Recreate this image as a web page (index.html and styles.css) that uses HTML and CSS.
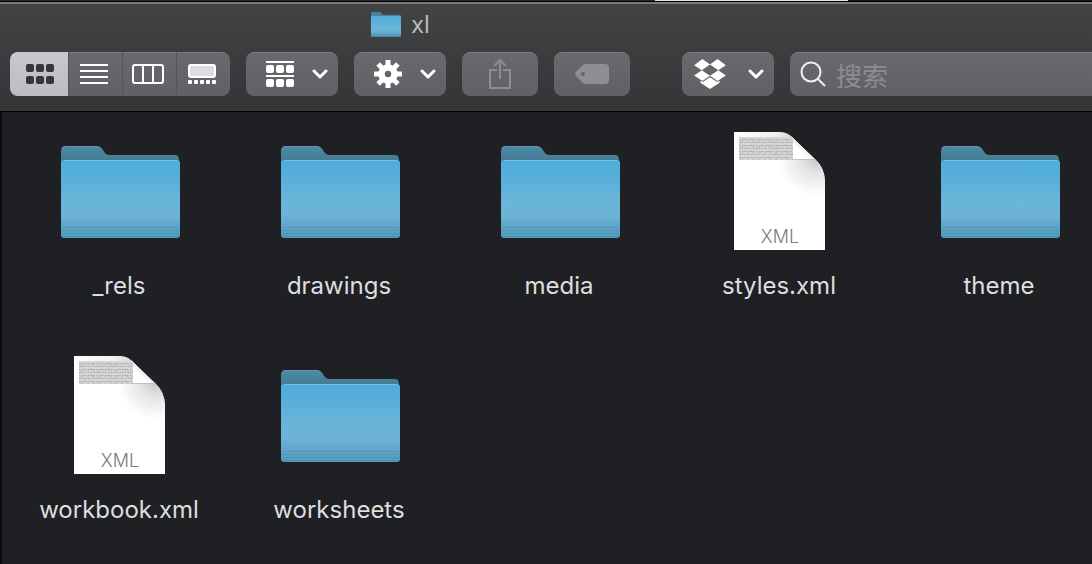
FILE: index.html
```html
<!DOCTYPE html>
<html lang="zh-CN">
<head>
<meta charset="utf-8">
<meta name="viewport" content="width=device-width, initial-scale=1">
<title>xl</title>
<link rel="stylesheet" href="styles.css">
</head>
<body>
<svg class="defs" aria-hidden="true">
  <defs>
    <linearGradient id="folder-front" x1="0" y1="0" x2="0" y2="1">
      <stop offset="0" stop-color="#50acda"/>
      <stop offset=".15" stop-color="#53aedb"/>
      <stop offset=".52" stop-color="#69b5d8"/>
      <stop offset=".7" stop-color="#6cb4d6"/>
      <stop offset=".84" stop-color="#62a6cb"/>
      <stop offset="1" stop-color="#509abb"/>
    </linearGradient>
    <linearGradient id="folder-back" x1="0" y1="0" x2="0" y2="1">
      <stop offset="0" stop-color="#4c8ba7"/>
      <stop offset=".2" stop-color="#44788f"/>
      <stop offset="1" stop-color="#416f87"/>
    </linearGradient>
    <linearGradient id="page-top" x1="0" y1="0" x2="1" y2="0">
      <stop offset="0" stop-color="#fff"/>
      <stop offset=".7" stop-color="#f0f0f0"/>
      <stop offset="1" stop-color="#d2d2d2"/>
    </linearGradient>
    <radialGradient id="curl-shadow" gradientUnits="userSpaceOnUse" cx="82" cy="26" r="38">
      <stop offset="0" stop-color="#c6c6c6"/>
      <stop offset=".4" stop-color="#e4e4e4"/>
      <stop offset="1" stop-color="#fff"/>
    </radialGradient>
    <linearGradient id="curl" x1="0" y1="1" x2="1" y2="0">
      <stop offset="0" stop-color="#fff"/>
      <stop offset=".35" stop-color="#fff"/>
      <stop offset=".6" stop-color="#dedede"/>
    </linearGradient>
    <pattern id="print" width="17" height="6" patternUnits="userSpaceOnUse">
      <rect width="17" height="6" fill="#d6d6d4"/>
      <path d="M0 1.500h4m1 0h2m1 0h5m1 0h3M0 4.500h2m1 0h6m1 0h3m1 0h2" stroke="#acacaa" stroke-width="1" stroke-dasharray="1.500 .6"/>
      <path d="M1 3h3m2 0h4m3 0h2" stroke="#bcbcba" stroke-width="1"/>
    </pattern>
    <symbol id="folder" viewBox="0 0 119 94">
      <path d="M0 88V6Q0 1 5 1h31q3 0 5 3l3 4q1 2 4 2h66q4 0 4 5v73z" fill="url(#folder-back)"/>
      <path d="M2 2.500Q3 1.500 6 1.500h30q3 0 5 3" fill="none" stroke="#5f9cb6" stroke-opacity=".7"/>
      <rect x="0" y="15" width="119" height="78" rx="3" fill="url(#folder-front)"/>
      <path d="M3 15.500h113" stroke="#73c0e4"/>
      <path d="M1 82.500h117M1 85.500h117M1 88.500h117" stroke="#4d93b7" stroke-opacity=".65"/>
      <path d="M1 91.500h117" stroke="#4594b4"/>
    </symbol>
    <symbol id="document" viewBox="0 0 91 118">
      <path d="M0 0h43c8 0 12 2 16 6l21 20q11 10 11 24v68H0z" fill="#fff"/>
      <path d="M0 0h43c8 0 12 2 16 6v21H0z" fill="url(#page-top)"/>
      <path d="M44 27h37q10 9 10 23v16H44z" fill="url(#curl-shadow)"/>
      <path d="M5 5h54v23H5z" fill="url(#print)"/>
      <path d="M59 6l21 21H59z" fill="url(#curl)"/>
      <path d="M59 27.500h21" stroke="#b4b4b4" stroke-opacity=".7"/>
      <text class="doc-kind" x="46" y="111" text-anchor="middle">XML</text>
    </symbol>
    <symbol id="chevron" viewBox="0 0 16 10">
      <path d="M2 2l6 6 6-6" fill="none" stroke="#fff" stroke-width="3" stroke-linecap="round" stroke-linejoin="round"/>
    </symbol>
  </defs>
</svg>

<main class="window">
  <header class="chrome">
    <h1 class="title"><svg class="title-icon" viewBox="0 0 119 94" preserveAspectRatio="none" aria-hidden="true"><use href="#folder"/></svg>xl</h1>
    <div class="toolbar" role="toolbar" aria-label="工具栏">
      <div class="segments">
        <button class="segment selected" type="button" aria-label="图标" aria-pressed="true">
          <svg width="28" height="20" viewBox="0 0 28 20" fill="#36373a"><rect width="8" height="8" rx="2"/><rect x="10" width="8" height="8" rx="2"/><rect x="20" width="8" height="8" rx="2"/><rect y="12" width="8" height="8" rx="2"/><rect x="10" y="12" width="8" height="8" rx="2"/><rect x="20" y="12" width="8" height="8" rx="2"/></svg>
        </button>
        <button class="segment" type="button" aria-label="列表">
          <svg width="28" height="20" viewBox="0 0 28 20" fill="#fff"><path d="M0 0h28v2H0zM0 6h28v2H0zM0 12h28v2H0zM0 18h28v2H0z"/></svg>
        </button>
        <button class="segment" type="button" aria-label="分栏">
          <svg width="32" height="20" viewBox="0 0 32 20" fill="none" stroke="#fff" stroke-width="2"><rect x="1" y="1" width="30" height="18" rx="2"/><path d="M11 1v18M21 1v18"/></svg>
        </button>
        <button class="segment" type="button" aria-label="画廊">
          <svg width="28" height="20" viewBox="0 0 28 20"><rect x="1" y="1" width="26" height="12" rx="2" fill="#dcdde1" stroke="#fff" stroke-width="2"/><g fill="#fff"><rect y="16" width="4" height="4" rx="1"/><rect x="6" y="16" width="4" height="4" rx="1"/><rect x="12" y="16" width="4" height="4" rx="1"/><rect x="18" y="16" width="4" height="4" rx="1"/><rect x="24" y="16" width="4" height="4" rx="1"/></g></svg>
        </button>
      </div>
      <button class="tool menu" type="button" aria-label="分组">
        <svg width="28" height="26" viewBox="0 0 28 26" fill="#fff"><path d="M0 0h28v2H0zM0 14h28v2H0z"/><rect y="4" width="8" height="8" rx="2"/><rect x="10" y="4" width="8" height="8" rx="2"/><rect x="20" y="4" width="8" height="8" rx="2"/><rect y="18" width="8" height="8" rx="2"/><rect x="10" y="18" width="8" height="8" rx="2"/><rect x="20" y="18" width="8" height="8" rx="2"/></svg>
        <svg class="chevron"><use href="#chevron"/></svg>
      </button>
      <button class="tool menu" type="button" aria-label="操作">
        <svg width="28" height="28" viewBox="-14 -14 28 28"><circle r="6.500" fill="none" stroke="#fff" stroke-width="6.500"/><g stroke="#fff" stroke-width="5"><path d="M0-14v5M0 9v5M-14 0h5M9 0h5"/><path d="M0-14v6M0 8v6M-14 0h6M8 0h6" transform="rotate(45)"/></g></svg>
        <svg class="chevron"><use href="#chevron"/></svg>
      </button>
      <button class="tool" type="button" aria-label="共享" disabled>
        <svg width="22" height="32" viewBox="0 0 22 32" fill="none" stroke="#8c8d90" stroke-width="2"><path d="M8 12H1v18h20V12h-7M11 21V2M5 8l6-6 6 6"/></svg>
      </button>
      <button class="tool" type="button" aria-label="标签" disabled>
        <svg width="34" height="20" viewBox="0 0 34 20"><path fill="#8e8f92" fill-rule="evenodd" d="M10 0h20q4 0 4 4v12q0 4-4 4H10q-1 0-2-1L1 12q-2-2 0-4L8 1q1-1 2-1zM8 8a2 2 0 1 0 0 4 2 2 0 0 0 0-4z"/></svg>
      </button>
      <button class="tool menu dropbox" type="button" aria-label="Dropbox">
        <svg width="32" height="30" viewBox="72 53 96 91" fill="#fff"><path d="M97 53l23 17-25 17-23-15zM143 53l-23 17 25 17 23-15zM95 87l25 17-23 16-25-17zM145 87l-25 17 23 16 25-17zM120 108l-22 15-7-4v6l29 19 29-19v-6l-7 4z"/></svg>
        <svg class="chevron"><use href="#chevron"/></svg>
      </button>
      <label class="search">
        <svg width="26" height="26" viewBox="0 0 26 26" fill="none" stroke="#f2f2f2" stroke-width="2"><circle cx="11" cy="11" r="9.500"/><path d="M18 18l7 7"/></svg>
        <input type="search" placeholder="搜索" aria-label="搜索">
      </label>
    </div>
  </header>

  <ul class="files">
    <li class="file"><svg class="folder-icon" aria-hidden="true"><use href="#folder"/></svg><span class="name">_rels</span></li>
    <li class="file"><svg class="folder-icon" aria-hidden="true"><use href="#folder"/></svg><span class="name">drawings</span></li>
    <li class="file"><svg class="folder-icon" aria-hidden="true"><use href="#folder"/></svg><span class="name">media</span></li>
    <li class="file"><svg class="doc-icon" role="img" aria-label="XML"><use href="#document"/></svg><span class="name">styles.xml</span></li>
    <li class="file"><svg class="folder-icon" aria-hidden="true"><use href="#folder"/></svg><span class="name">theme</span></li>
    <li class="file"><svg class="doc-icon" role="img" aria-label="XML"><use href="#document"/></svg><span class="name">workbook.xml</span></li>
    <li class="file"><svg class="folder-icon" aria-hidden="true"><use href="#folder"/></svg><span class="name">worksheets</span></li>
  </ul>
</main>
</body>
</html>
```
FILE: styles.css
```css
* { box-sizing: border-box; }

body {
  margin: 0;
  min-height: 100vh;
  display: flex;
  flex-direction: column;
  overflow: hidden;
  background: #000;
  color: #dededf;
  font-family: Inter, "Noto Sans CJK SC", sans-serif;
}

/* Sliver of the window behind */
body::before {
  content: "";
  height: 1px;
  margin-bottom: 1px;
  background: linear-gradient(90deg, #242526 0 655px, #e4e8e4 655px 848px, #161817 848px);
}

.defs { position: absolute; width: 0; height: 0; }

.window {
  flex: 1;
  display: flex;
  flex-direction: column;
}

.chrome {
  border-top: 2px solid #77797a;
  border-bottom: 1px solid #000;
  padding-bottom: 15px;
  background: linear-gradient(#424345, #343537);
}

.title {
  display: flex;
  align-items: center;
  gap: 10px;
  height: 40px;
  margin: 0;
  padding-left: 371px;
  color: #b9babb;
  font-size: 24px;
  font-weight: 400;
}

.title-icon { width: 30px; height: 25px; }

.toolbar {
  display: flex;
  gap: 16px;
  height: 52px;
  padding: 8px 0 0 10px;
}

.segments, .tool, .search {
  flex: none;
  height: 44px;
  border: 0;
  border-radius: 8px;
  background: linear-gradient(#7c7d80 1px, #68696c 1px, #606164);
}

.segments {
  display: flex;
  width: 220px;
  overflow: hidden;
}

.segment {
  flex: 1;
  display: flex;
  align-items: center;
  justify-content: center;
  padding: 0 3px 0 0;
  border: 0;
  border-left: 1px solid #545558;
  background: none;
}

.segment.selected {
  flex: 0 0 58px;
  padding: 0 0 0 2px;
  border: 0;
  background: linear-gradient(#c7c8cd, #bcbdc2);
}

.tool {
  display: flex;
  align-items: center;
  justify-content: center;
  width: 76px;
  padding: 0;
}

.tool.menu {
  justify-content: space-between;
  width: 92px;
  padding: 0 10px 0 20px;
}

.tool.dropbox {
  margin-left: 36px;
  padding-left: 12px;
}

.chevron { width: 16px; height: 10px; }

.search {
  flex: 1;
  display: flex;
  align-items: center;
  gap: 10px;
  padding-left: 10px;
  border-radius: 8px 0 0 8px;
}

.search svg { flex: none; }

.search input {
  flex: 1;
  min-width: 0;
  padding: 0;
  border: 0;
  outline: 0;
  background: none;
  color: #fff;
  font: 26px "Noto Sans CJK SC", sans-serif;
}

.search input::placeholder { color: #8c8d90; }

.files {
  flex: 1;
  display: grid;
  grid-template-columns: repeat(5, 220px);
  grid-auto-rows: 224px;
  align-content: start;
  margin: 0;
  padding: 20px 0 0 7px;
  border-left: 2px solid #0a0a0b;
  background: #1f2023;
  list-style: none;
}

.file {
  display: flex;
  flex-direction: column;
  align-items: center;
}

.folder-icon {
  width: 119px;
  height: 94px;
  margin: 13px 0 31px 3px;
}

.doc-icon {
  width: 91px;
  height: 118px;
  margin-bottom: 20px;
}

.doc-kind {
  fill: #7b7b7b;
  font: 300 18px Inter, sans-serif;
}

.name {
  font-size: 24px;
  font-weight: 400;
  line-height: 32px;
}
```
